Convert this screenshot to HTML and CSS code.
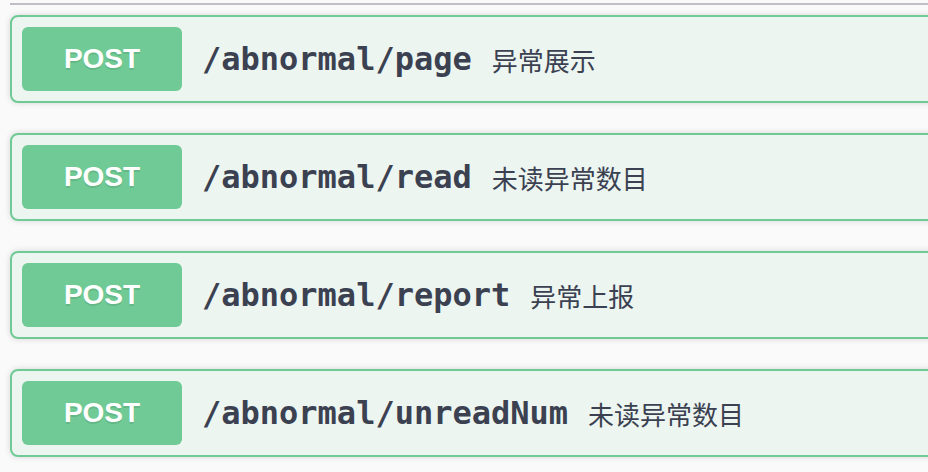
FILE: index.html
```html
<!DOCTYPE html>
<html lang="zh">
<head>
<meta charset="utf-8">
<title>abnormal</title>
<link rel="stylesheet" href="styles.css">
</head>
<body>
<div class="wrap">
  <div class="tag-line"></div>
  <div class="ops">
    <div class="opblock">
      <div class="summary">
        <span class="method">POST</span>
        <span class="path">/abnormal/page</span>
        <span class="desc">异常展示</span>
      </div>
    </div>
    <div class="opblock">
      <div class="summary">
        <span class="method">POST</span>
        <span class="path">/abnormal/read</span>
        <span class="desc">未读异常数目</span>
      </div>
    </div>
    <div class="opblock">
      <div class="summary">
        <span class="method">POST</span>
        <span class="path">/abnormal/report</span>
        <span class="desc">异常上报</span>
      </div>
    </div>
    <div class="opblock">
      <div class="summary">
        <span class="method">POST</span>
        <span class="path">/abnormal/unreadNum</span>
        <span class="desc">未读异常数目</span>
      </div>
    </div>
  </div>
</div>
</body>
</html>
```

FILE: styles.css
```css
html, body {
  margin: 0;
  padding: 0;
  background: #fafafa;
  overflow: hidden;
}

.wrap {
  width: 1000px;
  padding-left: 10px;
}

.tag-line {
  margin-top: 3px;
  height: 2px;
  background: #bfc0c6;
}

.ops {
  margin-top: 10px;
}

.opblock {
  border: 2px solid #6fca95;
  border-radius: 8px;
  background: #ecf5f0;
  box-shadow: 0 0 6px rgba(0, 0, 0, 0.15);
  margin-bottom: 30px;
}

.summary {
  display: flex;
  align-items: center;
  padding: 10px;
}

.method {
  flex: none;
  width: 160px;
  height: 64px;
  border-radius: 6px;
  background: #6fca95;
  color: #fff;
  font-family: "Liberation Sans", Arial, sans-serif;
  font-weight: 700;
  font-size: 28px;
  line-height: 64px;
  text-align: center;
  text-shadow: 0 2px 0 rgba(0, 0, 0, 0.1);
}

.path {
  padding: 0 20px;
  font-family: "DejaVu Sans Mono", monospace;
  font-weight: 700;
  font-size: 32px;
  color: #3b4151;
}

.desc {
  font-family: "Noto Sans CJK SC", "Noto Sans", sans-serif;
  font-size: 26px;
  color: #3b4151;
}
```
